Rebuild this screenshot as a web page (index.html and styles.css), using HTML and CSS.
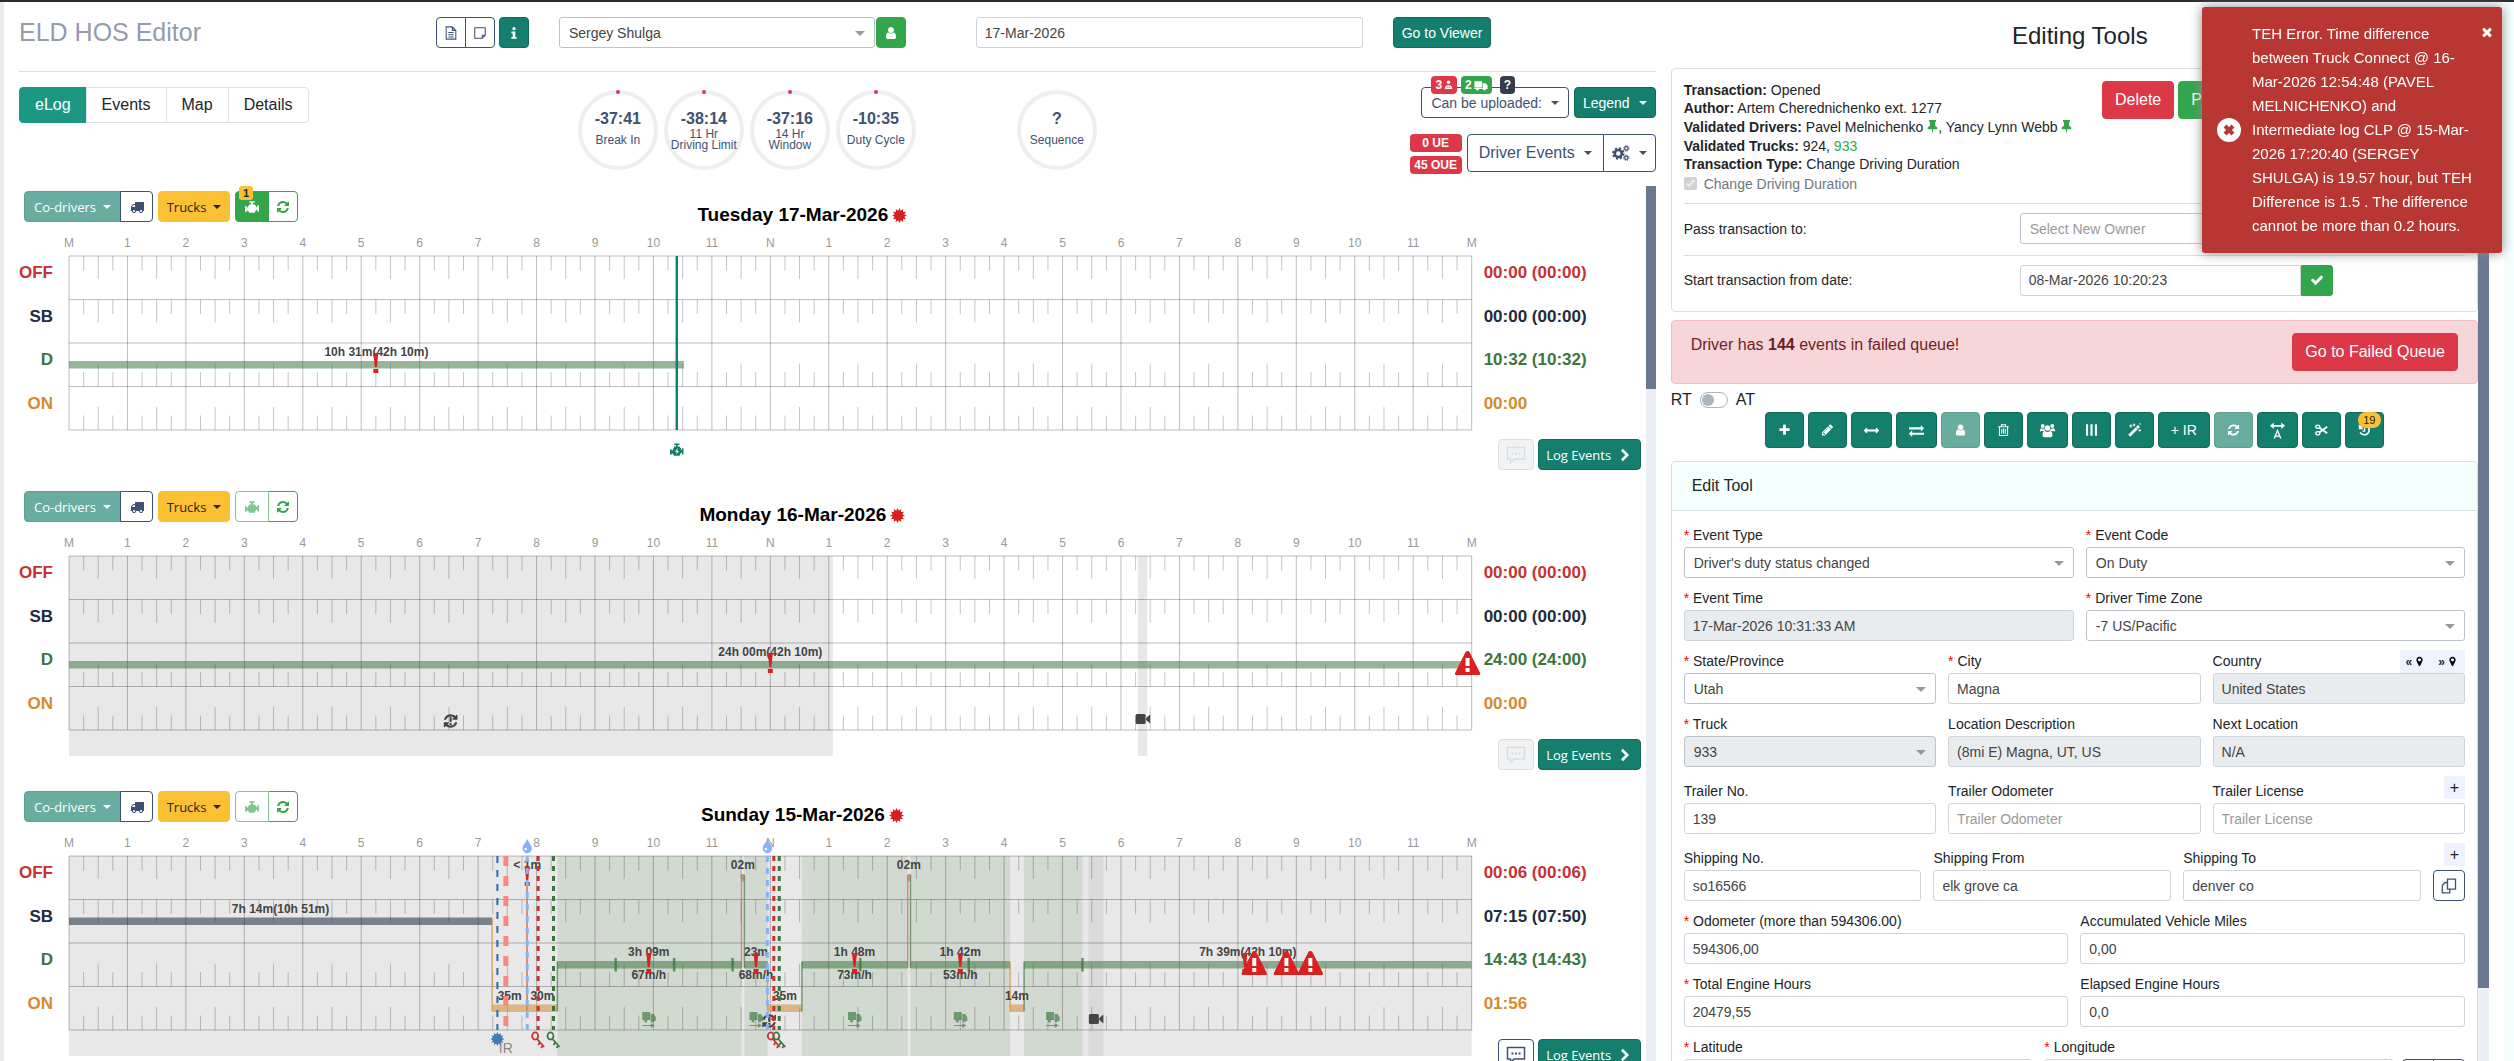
FILE: index.html
```html
<!DOCTYPE html>
<html lang="en">
<head>
<meta charset="utf-8">
<title>ELD HOS Editor</title>
<link rel="stylesheet" href="styles.css">
</head>
<body>
<svg class="sprite" aria-hidden="true">
  <symbol id="i-refresh" viewBox="0 0 1792 1792"><path d="M1639 1056q0 5-1 7-64 268-268 434.5t-478 166.500q-146 0-282.500-55t-243.500-157l-129 129q-19 19-45 19t-45-19-19-45v-448q0-26 19-45t45-19h448q26 0 45 19t19 45-19 45l-137 137q71 66 161 102t187 36q134 0 250-65t186-179q11-17 53-117 8-23 30-23h192q13 0 22.500 9.500t9.500 22.500zm25-800v448q0 26-19 45t-45 19h-448q-26 0-45-19t-19-45 19-45l138-138q-148-137-349-137-134 0-250 65t-186 179q-11 17-53 117-8 23-30 23h-199q-13 0-22.500-9.500t-9.500-22.500v-7q65-268 270-434.500t480-166.500q146 0 284 55.500t245 156.500l130-129q19-19 45-19t45 19 19 45z"/></symbol>
  <symbol id="i-truck" viewBox="0 0 1792 1792"><path d="M640 1408q0-52-38-90t-90-38-90 38-38 90 38 90 90 38 90-38 38-90zm-384-512h384v-256h-158q-13 0-22 9l-195 195q-9 9-9 22v30zm1280 512q0-52-38-90t-90-38-90 38-38 90 38 90 90 38 90-38 38-90zm256-1088v1024q0 15-4 26.500t-13.500 18.500-16.500 11.500-23.500 6-22.500 2-25.500 0-22.500-.5q0 106-75 181t-181 75-181-75-75-181h-384q0 106-75 181t-181 75-181-75-75-181h-64q-3 0-22.500.5t-25.500 0-22.500-2-23.500-6-16.500-11.500-13.500-18.500-4-26.500q0-26 19-45t45-19v-320q0-8-.5-35t0-38 2.500-34.500 6.500-37 14-30.500 22.500-30l198-198q19-19 50.500-32t58.500-13h160v-192q0-26 19-45t45-19h1024q26 0 45 19t19 45z"/></symbol>
  <symbol id="i-plus" viewBox="0 0 1792 1792"><path d="M1600 736v192q0 40-28 68t-68 28h-416v416q0 40-28 68t-68 28h-192q-40 0-68-28t-28-68v-416h-416q-40 0-68-28t-28-68v-192q0-40 28-68t68-28h416v-416q0-40 28-68t68-28h192q40 0 68 28t28 68v416h416q40 0 68 28t28 68z"/></symbol>
  <symbol id="i-pencil" viewBox="0 0 1792 1792"><path d="M491 1536l91-91-235-235-91 91v107h128v128h107zm523-928q0-22-22-22-10 0-17 7l-542 542q-7 7-7 17 0 22 22 22 10 0 17-7l542-542q7-7 7-17zm-54-192l416 416-832 832h-416v-416zm683 96q0 53-37 90l-166 166-416-416 166-165q36-38 90-38 53 0 91 38l235 234q37 39 37 91z"/></symbol>
  <symbol id="i-check" viewBox="0 0 1792 1792"><path d="M1671 566q0 40-28 68l-724 724-136 136q-28 28-68 28t-68-28l-136-136-362-362q-28-28-28-68t28-68l136-136q28-28 68-28t68 28l294 295 656-657q28-28 68-28t68 28l136 136q28 28 28 68z"/></symbol>
  <symbol id="i-times" viewBox="0 0 1792 1792"><path d="M1490 1322q0 40-28 68l-136 136q-28 28-68 28t-68-28l-294-294-294 294q-28 28-68 28t-68-28l-136-136q-28-28-28-68t28-68l294-294-294-294q-28-28-28-68t28-68l136-136q28-28 68-28t68 28l294 294 294-294q28-28 68-28t68 28l136 136q28 28 28 68t-28 68l-294 294 294 294q28 28 28 68z"/></symbol>
  <symbol id="i-arrows" viewBox="0 0 1792 1792"><path d="M1792 896q0 26-19 45l-256 256q-19 19-45 19t-45-19-19-45v-128h-1024v128q0 26-19 45t-45 19-45-19l-256-256q-19-19-19-45t19-45l256-256q19-19 45-19t45 19 19 45v128h1024v-128q0-26 19-45t45-19 45 19l256 256q19 19 19 45z"/></symbol>
  <symbol id="i-exchange" viewBox="0 0 1792 1792"><path d="M1792 1184v192q0 13-9.500 22.500t-22.500 9.500h-1376v192q0 13-9.500 22.500t-22.500 9.500q-12 0-24-10l-319-320q-9-9-9-22 0-14 9-23l320-320q9-9 23-9 13 0 22.500 9.500t9.500 22.500v192h1376q13 0 22.500 9.500t9.500 22.500zm0-544q0 14-9 23l-320 320q-9 9-23 9-13 0-22.500-9.500t-9.500-22.500v-192h-1376q-13 0-22.500-9.500t-9.500-22.500v-192q0-13 9.500-22.500t22.500-9.500h1376v-192q0-14 9-23t23-9q12 0 24 10l319 319q9 9 9 23z"/></symbol>
  <symbol id="i-user" viewBox="0 0 1792 1792"><path d="M1536 1399q0 109-62.500 187t-150.500 78h-854q-88 0-150.500-78t-62.500-187q0-85 8.500-160.500t31.500-152 58.500-131 94-89 134.500-34.500q131 128 313 128t313-128q76 0 134.500 34.500t94 89 58.500 131 31.500 152 8.500 160.500zm-256-887q0 159-112.500 271.500t-271.500 112.500-271.500-112.500-112.500-271.500 112.500-271.500 271.500-112.500 271.500 112.500 112.500 271.500z"/></symbol>
  <symbol id="i-marker" viewBox="0 0 1792 1792"><path d="M1152 640q0-106-75-181t-181-75-181 75-75 181 75 181 181 75 181-75 75-181zm256 0q0 109-33 179l-364 774q-16 33-47.500 52t-67.500 19-67.500-19-46.500-52l-365-774q-33-70-33-179 0-212 150-362t362-150 362 150 150 362z"/></symbol>
  <symbol id="i-trash" viewBox="0 0 16 16"><path d="M1.500 4h13M5.500 4V1.500h5V4M3 4.500V14.800h10V4.500M5.800 6.500v6M8 6.500v6M10.200 6.500v6" fill="none" stroke="currentColor" stroke-width="1.300"/></symbol>
  <symbol id="i-users" viewBox="0 0 18 16"><circle cx="3.300" cy="2.600" r="2.300"/><circle cx="14.700" cy="2.600" r="2.300"/><circle cx="9" cy="5" r="3.200"/><path d="M0 8.500C0 6 .8 5.200 2 5.200c1 .8 2 .8 3 .3.200 1.400.6 2.300 1.300 3H1.500C.6 9.800 0 9.400 0 8.500zM18 8.500c0-2.500-.8-3.300-2-3.300-1 .8-2 .8-3 .3-.2 1.400-.6 2.300-1.300 3h4.800c.9 1.300 1.500.9 1.500 0zM3 13.500C3 10.500 4 8.600 6 8.600c2 1.500 4 1.500 6 0 2 0 3 1.900 3 4.900 0 1.500-.8 2.500-2 2.500H5c-1.200 0-2-1-2-2.500z"/></symbol>
  <symbol id="i-bars" viewBox="0 0 16 16"><path d="M2.500 1v14M8 1v14M13.500 1v14" fill="none" stroke="currentColor" stroke-width="2.600"/></symbol>
  <symbol id="i-magic" viewBox="0 0 16 16"><path d="M1.500 15L13.500 3" fill="none" stroke="currentColor" stroke-width="3.400"/><path d="M9.800 4.700l2 2" stroke="#157f6e" stroke-width="1"/><path d="M1.500 3h4M3.500 1v4M7.500 0v3.500M6 1.800h3M13 8.500h3M14.500 7v3M14 .5h2" stroke="currentColor" stroke-width="1.200" fill="none"/></symbol>
  <symbol id="i-cut" viewBox="0 0 16 16"><g fill="none" stroke="currentColor" stroke-width="1.700"><ellipse cx="3.500" cy="4" rx="2.500" ry="2"/><ellipse cx="3.500" cy="12" rx="2.500" ry="2"/><path d="M5.500 5.200L15 12M5.500 10.800L15 4" stroke-width="2.200"/></g></symbol>
  <symbol id="i-history" viewBox="0 0 16 16"><path d="M3 4.200A6 6 0 1 1 2.600 11" fill="none" stroke="currentColor" stroke-width="2"/><path d="M1 1v6h6zM7.400 5h1.500v5H5.600V8.600h1.800z"/></symbol>
  <symbol id="i-width" viewBox="0 0 16 18"><path d="M0 4l4-3.500V3h8V.5L16 4l-4 3.500V5H4v2.500z"/><path d="M4.500 17.500L8 9l3.500 8.500M5.500 15h5" fill="none" stroke="currentColor" stroke-width="1.400"/></symbol>
  <symbol id="i-file" viewBox="0 0 16 16"><path d="M2.500 1h7l4 4v10h-11zM9.500 1v4h4M5 7.500h6M5 10h6M5 12.500h6" fill="none" stroke="currentColor" stroke-width="1.200"/></symbol>
  <symbol id="i-note" viewBox="0 0 16 16"><path d="M2 2h12v8.500L10.500 14H2zM14 10.500h-3.500V14" fill="none" stroke="currentColor" stroke-width="1.200"/></symbol>
  <symbol id="i-info" viewBox="0 0 16 16"><circle cx="8" cy="3" r="1.900"/><path d="M5 6.200h4.500v6.300H11v2H5v-2h1.500V8.200H5z"/></symbol>
  <symbol id="i-engine" viewBox="0 0 16 16"><path d="M5 1.500h6v1.700H9V5h2.200l1.600 2v1H14V6h2v7h-2v-1.800h-1.200L11 14.500H5L3.200 12H2v1.500H0V7h2v1.500h1L5 5h2V3.200H5z"/></symbol>
  <symbol id="i-engine2" viewBox="0 0 16 16"><path d="M5 .5h6v1.700H9V4h2l2 2.500V8h1V6h2v7h-2v-1.800h-1.200L11 14.500H5L3.200 12H2v1.500H0V7h2v1.500h1L5 4h2V2.200H5z"/><path d="M9 6L6 10h2l-.8 3L10.500 9h-2z" fill="#fff"/></symbol>
  <symbol id="i-chevron" viewBox="0 0 12 16"><path d="M2.500 2l6 6-6 6" fill="none" stroke="currentColor" stroke-width="3"/></symbol>
  <symbol id="i-comment" viewBox="0 0 20 18"><path d="M1.500 1.500h17v11.500H8L4.500 16.500V13h-3z" fill="none" stroke="currentColor" stroke-width="1.500"/><path d="M5.500 6.500h2v2h-2zM9 6.500h2v2H9zM12.500 6.500h2v2h-2z"/></symbol>
  <symbol id="i-pin" viewBox="0 0 12 16"><path d="M2 0h8v2H9v4.500l2.500 2V10.500H6.800L6 16l-.8-5.500H.5V8.500L3 6.500V2H2z"/></symbol>
  <symbol id="i-copy" viewBox="0 0 16 16"><path d="M6.500 1.200h8v10h-8zM6 4.500H4L1.300 7.500v7.300h7.500V11.500" fill="none" stroke="currentColor" stroke-width="1.300"/></symbol>
  <symbol id="i-cogs" viewBox="0 0 18 16"><g fill="none" stroke="currentColor"><circle cx="6.300" cy="8.500" r="3.500" stroke-width="2.600"/><circle cx="6.300" cy="8.500" r="5.300" stroke-width="1.800" stroke-dasharray="2.200 1.960"/><circle cx="14.300" cy="3.400" r="1.700" stroke-width="1.200"/><circle cx="14.300" cy="3.400" r="2.700" stroke-width="1" stroke-dasharray="1.100 1.020"/><circle cx="14.300" cy="12.800" r="1.700" stroke-width="1.200"/><circle cx="14.300" cy="12.800" r="2.700" stroke-width="1" stroke-dasharray="1.100 1.020"/></g></symbol>
  <symbol id="i-driver" viewBox="0 0 12 14"><circle cx="6" cy="3.200" r="2.400"/><path d="M.8 12.500c0-3.500 2-5 5.200-5s5.200 1.500 5.200 5z"/><path d="M3 11c1.500-1.600 4.500-1.600 6 0" stroke="#dc3848" stroke-width="1" fill="none"/></symbol>
  <symbol id="i-van" viewBox="0 0 18 14"><path d="M.5 1.500h10v8H.5zM11.300 4h3.500L17.500 7v4.500H.5v-1.300h10.800z"/><circle cx="4.500" cy="11.500" r="1.900"/><circle cx="13.500" cy="11.500" r="1.900"/></symbol>
  <symbol id="i-seal" viewBox="-8 -8 16 16"><path d="M8 0L5.100 1.400 6.900 4 3.700 3.700 4 6.900 1.400 5.100 0 8-1.400 5.100-4 6.900-3.700 3.700-6.900 4-5.100 1.400-8 0-5.100-1.400-6.900-4-3.700-3.700-4-6.900-1.400-5.100 0-8 1.400-5.100 4-6.900 3.700-3.700 6.900-4 5.100-1.400z"/></symbol>
</svg>

<main class="layout">
  <section class="editor">
    <header class="topbar">
      <h1>ELD HOS Editor</h1>
      <div class="row">
        <div class="group"><button class="btn sm outline sq" aria-label="Document"><svg class="ic"><use href="#i-file"/></svg></button><button class="btn sm outline sq" aria-label="Note"><svg class="ic"><use href="#i-note"/></svg></button></div>
        <button class="btn sm teal sq" aria-label="Info"><svg class="ic"><use href="#i-info"/></svg></button>
      </div>
      <div class="driver">
        <span class="select"><select aria-label="Driver"><option>Sergey Shulga</option></select></span>
        <button class="btn sm green sq" aria-label="Driver profile"><svg class="ic"><use href="#i-user"/></svg></button>
      </div>
      <input class="date" type="text" value="17-Mar-2026" aria-label="Date">
      <div><button class="btn sm teal">Go to Viewer</button></div>
    </header>

    <div class="subbar">
      <nav class="tabs"><a href="#elog" class="on">eLog</a><a href="#events">Events</a><a href="#map">Map</a><a href="#details">Details</a></nav>
      <div class="gauges">
        <div class="gauge run"><b>-37:41</b><span>Break In</span></div>
        <div class="gauge run two"><b>-38:14</b><span>11 Hr<br>Driving Limit</span></div>
        <div class="gauge run two"><b>-37:16</b><span>14 Hr<br>Window</span></div>
        <div class="gauge run"><b>-10:35</b><span>Duty Cycle</span></div>
        <div class="gauge seq"><b>?</b><span>Sequence</span></div>
      </div>
      <div class="actions">
        <div class="row">
          <div class="upload">
            <button class="btn sm outline">Can be uploaded: <i class="caret"></i></button>
            <div class="marks"><span class="badge red">3 <svg class="ic s"><use href="#i-driver"/></svg></span><span class="badge green">2 <svg class="ic v"><use href="#i-van"/></svg></span><span class="badge dark">?</span></div>
          </div>
          <button class="btn sm teal">Legend <i class="caret"></i></button>
        </div>
        <div class="row">
          <div class="counts"><span class="badge red">0 UE</span><span class="badge red">45 OUE</span></div>
          <div class="group"><button class="btn lg outline events">Driver Events <i class="caret"></i></button><button class="btn lg outline cog" aria-label="Settings"><svg class="ic"><use href="#i-cogs"/></svg><i class="caret"></i></button></div>
        </div>
      </div>
    </div>

    <div class="pane">
      <div class="days" id="days"></div>
      <div class="scroll logs"><i></i></div>
    </div>
  </section>

  <section class="tools">
    <h2>Editing Tools</h2>
    <div class="pane">
      <div class="stack">
        <div class="card info">
          <div class="summary">
            <div>
              <p><b>Transaction:</b> Opened</p>
              <p><b>Author:</b> Artem Cherednichenko ext. 1277</p>
              <p class="pinned"><b>Validated Drivers:</b> Pavel Melnichenko <svg class="pin"><use href="#i-pin"/></svg>, Yancy Lynn Webb <svg class="pin"><use href="#i-pin"/></svg></p>
              <p><b>Validated Trucks:</b> 924, <span class="ok">933</span></p>
              <p><b>Transaction Type:</b> Change Driving Duration</p>
              <label class="tick"><input type="checkbox" checked disabled> Change Driving Duration</label>
            </div>
            <div class="row"><button class="btn lg red">Delete</button><button class="btn lg green">Process</button></div>
          </div>
          <div class="line"><label for="owner">Pass transaction to:</label><span class="select"><select id="owner" class="dim"><option>Select New Owner</option></select></span></div>
          <div class="line"><label for="start">Start transaction from date:</label><span class="row tight"><input id="start" type="text" value="08-Mar-2026 10:20:23"><button class="btn sm green" aria-label="Apply"><svg class="ic"><use href="#i-check"/></svg></button></span></div>
        </div>
        <div class="alert"><span>Driver has <b>144</b> events in failed queue!</span><button class="btn lg red">Go to Failed Queue</button></div>
        <label class="switch">RT <input type="checkbox" role="switch"> AT</label>
        <div class="toolbar">
          <button class="btn teal" aria-label="Add"><svg class="ic"><use href="#i-plus"/></svg></button>
          <button class="btn teal" aria-label="Edit"><svg class="ic"><use href="#i-pencil"/></svg></button>
          <button class="btn teal" aria-label="Move"><svg class="ic w"><use href="#i-arrows"/></svg></button>
          <button class="btn teal" aria-label="Swap"><svg class="ic w"><use href="#i-exchange"/></svg></button>
          <button class="btn teal faded" aria-label="Driver"><svg class="ic"><use href="#i-user"/></svg></button>
          <button class="btn teal" aria-label="Delete"><svg class="ic"><use href="#i-trash"/></svg></button>
          <button class="btn teal" aria-label="Team"><svg class="ic w"><use href="#i-users"/></svg></button>
          <button class="btn teal" aria-label="Columns"><svg class="ic"><use href="#i-bars"/></svg></button>
          <button class="btn teal" aria-label="Auto fix"><svg class="ic"><use href="#i-magic"/></svg></button>
          <button class="btn teal">+ IR</button>
          <button class="btn teal faded" aria-label="Refresh"><svg class="ic"><use href="#i-refresh"/></svg></button>
          <button class="btn teal" aria-label="Fit"><svg class="ic w"><use href="#i-width"/></svg></button>
          <button class="btn teal" aria-label="Cut"><svg class="ic"><use href="#i-cut"/></svg></button>
          <button class="btn teal hist" aria-label="History"><svg class="ic"><use href="#i-history"/></svg><span class="dot">19</span></button>
        </div>
        <form class="card form">
          <h3>Edit Tool</h3>
          <div class="fields">
            <div class="f2a">
              <div class="field"><label for="et" class="req">Event Type</label><span class="select"><select id="et"><option>Driver's duty status changed</option></select></span></div>
              <div class="field"><label for="ec" class="req">Event Code</label><span class="select"><select id="ec"><option>On Duty</option></select></span></div>
              <div class="field"><label for="tm" class="req">Event Time</label><input id="tm" type="text" value="17-Mar-2026 10:31:33 AM" disabled></div>
              <div class="field"><label for="tz" class="req">Driver Time Zone</label><span class="select"><select id="tz"><option>-7 US/Pacific</option></select></span></div>
            </div>
            <div class="f3">
              <div class="field"><label for="st" class="req">State/Province</label><span class="select"><select id="st"><option>Utah</option></select></span></div>
              <div class="field"><label for="ci" class="req">City</label><input id="ci" type="text" value="Magna"></div>
              <div class="field"><div class="lab"><label for="co">Country</label><span class="mini"><button type="button" aria-label="Previous location">«<svg class="mk"><use href="#i-marker"/></svg></button><button type="button" aria-label="Next location">»<svg class="mk"><use href="#i-marker"/></svg></button></span></div><input id="co" type="text" value="United States" disabled></div>
              <div class="field"><label for="tr" class="req">Truck</label><span class="select"><select id="tr" disabled><option>933</option></select></span></div>
              <div class="field"><label for="ld">Location Description</label><input id="ld" type="text" value="(8mi E) Magna, UT, US" disabled></div>
              <div class="field"><label for="nl">Next Location</label><input id="nl" type="text" value="N/A" disabled></div>
            </div>
            <div class="f3 apart">
              <div class="field"><label for="tn">Trailer No.</label><input id="tn" type="text" value="139"></div>
              <div class="field"><label for="to">Trailer Odometer</label><input id="to" type="text" placeholder="Trailer Odometer"></div>
              <div class="field"><div class="lab"><label for="tl">Trailer License</label><span class="mini add"><button type="button">+</button></span></div><input id="tl" type="text" placeholder="Trailer License"></div>
            </div>
            <div class="f4 apart">
              <div class="field"><label for="sn">Shipping No.</label><input id="sn" type="text" value="so16566"></div>
              <div class="field"><label for="sf">Shipping From</label><input id="sf" type="text" value="elk grove ca"></div>
              <div class="field"><label for="sh">Shipping To</label><input id="sh" type="text" value="denver co"></div>
              <div class="field end"><span class="mini add"><button type="button">+</button></span><button type="button" class="btn outline copy" aria-label="Copy"><svg class="ic"><use href="#i-copy"/></svg></button></div>
            </div>
            <div class="f2">
              <div class="field"><label for="od" class="req">Odometer (more than 594306.00)</label><input id="od" type="text" value="594306,00"></div>
              <div class="field"><label for="av">Accumulated Vehicle Miles</label><input id="av" type="text" value="0,00"></div>
              <div class="field"><label for="te" class="req">Total Engine Hours</label><input id="te" type="text" value="20479,55"></div>
              <div class="field"><label for="ee">Elapsed Engine Hours</label><input id="ee" type="text" value="0,0"></div>
            </div>
            <div class="fgeo">
              <div class="field"><label for="la" class="req">Latitude</label><input id="la" type="text"></div>
              <div class="field"><label for="lo" class="req">Longitude</label><input id="lo" type="text"></div>
              <div class="field end"><span class="group"><button type="button" class="btn outline copy" aria-label="Copy position"></button><button type="button" class="btn outline copy" aria-label="Paste position"></button></span></div>
            </div>
          </div>
        </form>
      </div>
      <div class="scroll form-scroll"><i></i></div>
    </div>
  </section>
</main>

<div class="toast" role="alert">
  <svg class="sign" viewBox="0 0 24 24"><circle cx="12" cy="12" r="12" fill="#fff"/><path d="M8 8l8 8M16 8l-8 8" stroke="#b93733" stroke-width="4"/></svg>
  <p>TEH Error. Time difference between Truck Connect @ 16-Mar-2026 12:54:48 (PAVEL MELNICHENKO) and Intermediate log CLP @ 15-Mar-2026 17:20:40 (SERGEY SHULGA) is 19.57 hour, but TEH Difference is 1.5 . The difference cannot be more than 0.2 hours.</p>
  <button aria-label="Close"><svg class="ic"><use href="#i-times"/></svg></button>
</div>
<script src="script.js"></script>
</body>
</html>
```
FILE: styles.css
```css
* { box-sizing: border-box; }
html { height: 100%; border-top: 2px solid #2d2b2e; }
body {
  margin: 0; height: 100%; overflow: hidden; padding: 0 15px;
  border-left: 4px solid #e9e9f0; border-right: 10px solid #f4fffd;
  font: 14px/18px "Liberation Sans", Arial, sans-serif; color: #212529; background: #fff;
}
p, h1, h2, h3 { margin: 0; font-weight: normal; }
.sprite { position: absolute; width: 0; height: 0; }
.ic { width: 14px; height: 14px; fill: currentColor; flex: none; display: block; }
.ic.s { width: 9px; height: 10px; }
.ic.v { width: 14px; height: 11px; }
.row { display: flex; gap: 4px; }
.row.tight { gap: 0; }
.group { display: flex; }
.group > .btn:not(:first-child) { border-top-left-radius: 0; border-bottom-left-radius: 0; margin-left: -1px; }
.group > .btn:not(:last-child) { border-top-right-radius: 0; border-bottom-right-radius: 0; }

.layout { display: grid; grid-template-columns: minmax(0, 2fr) minmax(0, 1fr); gap: 15px; height: 100%; }
.editor, .tools { display: flex; flex-direction: column; min-height: 0; }
.pane { display: flex; flex: 1; min-height: 0; overflow: hidden; }
.scroll { background: #ebeff3; flex: none; }
.scroll i { display: block; background: #6b7891; }
.logs { width: 10px; }
.logs i { height: 203px; }
.form-scroll { width: 11px; }
.form-scroll i { height: 920px; }

/* buttons */
.btn {
  display: inline-flex; align-items: center; justify-content: center; gap: 6px;
  border: 1px solid transparent; border-radius: 4px; padding: 0 8px;
  font: 14px/18px "Liberation Sans", Arial, sans-serif; color: #fff; background: none; white-space: nowrap;
}
.btn.sm { height: 31px; }
.btn.lg { height: 38px; font-size: 16px; padding: 0 12px; }
.btn.sq { width: 30px; padding: 0; }
.teal { background: #157f6e; border-color: #11695b; }
.green { background: #33a64c; border-color: #33a64c; }
.red { background: #dc3848; border-color: #dc3848; }
.dark { background: #343c49; }
.outline { border-color: #3f5173; color: #3f5173; background: #fff; }
.faded { background: #68ada0; border-color: #5fa093; }
.yellow { background: #fcc034; border-color: #fcc034; color: #212529; }
.caret { width: 0; height: 0; border: 4px solid transparent; border-top-color: currentColor; border-bottom: 0; margin-left: 3px; }
.badge {
  display: inline-flex; align-items: center; justify-content: center; gap: 2px; white-space: nowrap;
  height: 18px; padding: 0 4px; border-radius: 4px; color: #fff; font-size: 12px; font-weight: bold;
}

/* controls */
input[type=text], select {
  width: 100%; height: 31px; border: 1px solid #ced4da; border-radius: 3px; background: #fff;
  padding: 0 8px; font: 14px/18px "Liberation Sans", Arial, sans-serif; color: #444; display: block;
}
select { appearance: none; padding: 0 9px; border-color: #bfc3c8; }
select.dim, input::placeholder { color: #999; }
input:disabled, select:disabled { background: #e9ecef; color: #444; opacity: 1; }
.select { display: block; position: relative; flex: 1; }
.select::after {
  content: ""; position: absolute; right: 10px; top: calc(50% - 2px);
  border: 5px solid transparent; border-top-color: #999; border-bottom: 0;
}

/* top bar */
.topbar {
  display: grid; grid-template-columns: 417fr 123fr 417fr 417fr 263fr;
  height: 70px; padding-top: 15px; border-bottom: 1px solid #ddd; align-items: start;
}
.topbar h1 { font-size: 25px; line-height: 31px; color: #959ba9; }
.topbar .driver { display: flex; gap: 1px; margin-right: 70px; }
.topbar .date { width: auto; margin-right: 30px; }

.subbar { display: grid; grid-template-columns: 1fr auto 1fr; height: 114px; padding-top: 15px; align-items: start; }
.tabs { display: flex; }
.tabs a {
  height: 36px; padding: 0 15px; border: 1px solid #dee2e6; margin-left: -1px;
  font-size: 16px; line-height: 34px; color: #212529; text-decoration: none;
}
.tabs a:first-child { margin: 0; border-radius: 4px 0 0 4px; }
.tabs a:last-child { border-radius: 0 4px 4px 0; }
.tabs .on { background: #1c9783; border-color: #1c9783; color: #fff; }
.gauges { display: flex; gap: 6px; padding-top: 3px; color: #3f5173; text-align: center; }
.gauge {
  position: relative; width: 80px; height: 80px; border: 4px solid #eee; border-radius: 50%;
  padding-top: 16px; white-space: nowrap; font-size: 12px;
}
.gauge b { display: block; font-size: 16px; line-height: 18px; }
.gauge span { display: flex; justify-content: center; line-height: 11px; padding-top: 7px; }
.gauge.two span { padding-top: 1px; margin: 0 -4px; }
.gauge.run::before { content: ""; position: absolute; left: 34px; top: -4px; width: 4px; height: 4px; border-radius: 50%; background: #dc3848; }
.seq { margin-left: 95px; }
.actions { display: flex; flex-direction: column; align-items: flex-end; gap: 16px; }
.actions .row { gap: 5px; }
.upload { position: relative; }
.upload .btn { padding: 0 9px; }
.marks { position: absolute; left: 10px; top: -11px; display: flex; gap: 4px; }
.marks .dark { margin-left: 4px; }
.counts { display: flex; flex-direction: column; gap: 4px; }
.counts .badge { width: 52px; }
.actions .events { padding: 0 11px; }
.cog .ic { width: 18px; height: 16px; }
.actions .cog { padding: 0 8px; }

/* daily logs */
.days { flex: 1; padding-right: 5px; overflow: hidden; }
.day { height: 300px; padding-top: 5px; }
.day-head { display: grid; grid-template-columns: 1fr auto 1fr; padding: 0 60px 0 5px; height: 31px; }
.day-head .row { gap: 5px; }
.day-head .btn, .foot .btn { font-family: "Open Sans", "Noto Sans", sans-serif; font-size: 13px; gap: 6px; }
.day-head .truck { width: 33px; }
.day-head .engine { width: 34px; position: relative; }
.day-head .engine.idle { color: #7fc78e; background: #fff; border-color: #7fc78e; }
.day-head .sync { background: #fff; color: #33a64c; border-color: #33a64c; }
.day-head .codriver { width: 97px; gap: 4px; }
.day-head .trucks { width: 72px; gap: 4px; }
.day-head .num {
  position: absolute; left: 3px; top: -6px; width: 14px; height: 14px; border-radius: 3px;
  background: #fcc034; color: #212529; font: bold 11px/14px "Liberation Sans", sans-serif;
}
.day-head h3 { display: flex; align-items: center; gap: 4px; padding-top: 15px; font-size: 19px; font-weight: bold; line-height: 18px; color: #000; }
.day-head h3 .ic { width: 15px; height: 15px; color: #d81e1e; }
.day-body { display: grid; grid-template: 174px / 50px minmax(0, 1fr) 169px; margin-top: 34px; }
.rows { display: grid; grid-template-rows: repeat(4, 1fr); font-size: 17px; font-weight: bold; line-height: 33px; }
.rows.names { text-align: right; padding-right: 16px; }
.rows.sums { padding-left: 12px; }
.off { color: #c73132; } .sb { color: #1d2c3e; } .d { color: #3b763e; } .on-duty { color: #d58a2d; }
.chart { width: 100%; height: 200px; overflow: visible; display: block; font-family: "Liberation Sans", Arial, sans-serif; font-size: 12px; }
.foot { display: flex; justify-content: flex-end; gap: 4px; margin-top: 9px; }
.foot .cm { width: 36px; }
.foot .cm .ic { width: 20px; height: 18px; }
.foot .cm:disabled { color: #dadde0; border-color: #dadde0; background: #f1f2f3; }
.foot .log { width: 103px; gap: 7px; }

/* editing tools */
.tools h2 { font-size: 24px; line-height: 28px; padding-top: 20px; height: 66px; text-align: center; flex: none; }
.stack { flex: 1; min-width: 0; }
.card { border: 1px solid #ddd; border-radius: 4px; }
.info { height: 244px; padding: 12px; }
.summary { display: flex; justify-content: space-between; height: 123px; border-bottom: 1px solid #ddd; }
.summary .row { width: 363px; }
.pinned { padding-top: 1px; height: 20px; }
.pin { width: 11px; height: 14px; fill: #33a64c; vertical-align: -2px; }
.ok { color: #33a64c; }
.tick { display: flex; align-items: center; gap: 7px; color: #70777d; height: 21px; }
.tick input { margin: 0; width: 13px; height: 13px; }
.line { display: grid; grid-template-columns: 43fr 57fr; align-items: center; height: 51px; padding-bottom: 2px; }
.line + .line { border-top: 1px solid #ddd; }
.line .select { margin-right: 40px; }
.line .row input { width: 281px; border-radius: 3px 0 0 3px; }
.line .btn { width: 32px; border-radius: 0 3px 3px 0; }
.alert {
  display: flex; justify-content: space-between; align-items: flex-start; margin-top: 8px; height: 64px; padding: 12px 19px;
  border: 1px solid #f3bfc5; border-radius: 4px; background: #f7d6d9; color: #721c24; font-size: 16px;
}
.alert span { line-height: 24px; }
.switch { display: flex; align-items: center; gap: 8px; height: 28px; font-size: 16px; padding-top: 3px; }
.switch input { appearance: none; margin: 0; width: 28px; height: 16px; border: 1px solid #adb5bd; border-radius: 8px; background: #fff; position: relative; }
.switch input::before { content: ""; position: absolute; left: 1px; top: 1px; width: 12px; height: 12px; border-radius: 50%; background: #adb5bd; }
.toolbar { display: flex; justify-content: center; gap: 4px; height: 36px; }
.toolbar .btn { flex: none; padding: 0 12px; }
.toolbar .ic { width: 13px; }
.toolbar .ic.w { width: 15px; height: 17px; }
.toolbar .hist { position: relative; }
.dot { position: absolute; right: 2px; top: -1px; width: 23px; height: 16px; border-radius: 8px; background: #fcc034; color: #212529; font: 11px/16px "Liberation Sans", sans-serif; }
.form { margin-top: 13px; }
.form h3 { height: 49px; padding-left: 20px; font-size: 16px; line-height: 47px; background: #f5fffd; border-bottom: 1px solid #d5e3e0; border-radius: 4px 4px 0 0; }
.fields { padding: 4px 12px; }
.fields > div { display: grid; column-gap: 12px; }
.f2a { grid-template-columns: 390fr 379fr; }
.f2 { grid-template-columns: 1fr 1fr; }
.f3 { grid-template-columns: 1fr 1fr 1fr; }
.f4 { grid-template-columns: 1fr 1fr 1fr 32px; }
.fgeo { grid-template-columns: 1fr 1fr 60px; }
.apart { margin-top: 4px; }
.field > label { display: block; height: 32px; padding-top: 11px; white-space: nowrap; }
.lab { display: flex; justify-content: space-between; align-items: flex-end; height: 32px; }
.lab label { padding-bottom: 3px; }
.req::before { content: "* "; color: #f00; }
.mini { display: flex; }
.mini.add { padding-bottom: 4px; }
.mini button { height: 23px; border: 0; padding: 0 7px 0 6px; background: #eff3fd; display: flex; align-items: center; gap: 2px; font: bold 12px/18px "Liberation Sans", sans-serif; color: #212529; }
.mini.add button { width: 21px; padding: 0; justify-content: center; font-size: 16px; font-weight: normal; }
.mk { width: 11px; height: 11px; }
.field.end { display: flex; flex-direction: column; align-items: flex-end; justify-content: flex-end; }
.copy { width: 32px; height: 31px; padding: 0; }
.copy .ic { width: 16px; height: 16px; }

.toast {
  position: fixed; top: 7px; right: 12px; width: 300px; min-height: 246px; padding: 15px 20px 15px 50px;
  background: #b93733; color: #fff; border-radius: 3px; box-shadow: 0 0 12px #888;
}
.toast p { font-size: 15px; line-height: 24px; }
.toast .sign { position: absolute; left: 15px; top: 111px; width: 24px; height: 24px; }
.toast button { position: absolute; right: 8px; top: 18px; padding: 0; border: 0; background: none; color: #fff; }
```
FILE: script.js
```js
const ROW = 43.5;
const pct = h => (h / 24 * 100).toFixed(3) + '%';
const INK = { off: '#cf5a5a', sb: '#1d2c3e', d: '#3b763e', on: '#d58a2d' };
const LEVEL = { off: 0, sb: 1, d: 2, on: 3 };
const mid = s => (LEVEL[s] + 0.5) * ROW;

const rect = (a, b, y, h, fill, op = 1) =>
  `<rect x="${pct(a)}" y="${y}" width="${pct(b - a)}" height="${h}" fill="${fill}" opacity="${op}"/>`;
const vline = (h, y1, y2, color, w, extra = '') =>
  `<line x1="${pct(h)}" x2="${pct(h)}" y1="${y1}" y2="${y2}" stroke="${color}" stroke-width="${w}" ${extra}/>`;
const text = (h, y, s, extra = 'font-weight="bold" fill="#444"') =>
  `<text x="${pct(h)}" y="${y}" text-anchor="middle" ${extra}>${s}</text>`;
const at = (h, y, body) => `<svg x="${pct(h)}" y="${y}" overflow="visible">${body}</svg>`;

const bang = (h, y = 97) => at(h, y, '<path d="M-2.500 0h5L1 14h-2zM-2.500 16h5v4h-5z" fill="#dc1f1f"/>');
const warn = h => at(h, 95, '<path d="M0 0q1.500 0 2 1L12.500 22q.8 2-1 2h-23q-1.800 0-1-2L-2 1q.5-1 2-1z" fill="#dc1f1f"/><path d="M-2 7h4v8h-4zM-2 17h4v4h-4z" fill="#fff"/>');
const camera = h => at(h, 163, '<rect x="-7" y="-5" width="10" height="10" rx="1.500" fill="#444"/><path d="M3.500-1L7.500-4.500v9L3.500 1z" fill="#444"/>');
const sync = h => at(h, 165, '<svg x="-8" y="-8" width="16" height="16" fill="#444"><use href="#i-refresh"/></svg><path d="M-1-4h2v5h-2zM-1 2h2v2h-2z" fill="#444"/>');
const trip = h => at(h, 156, '<g fill="#3b763e" opacity=".65"><path d="M-6.500 0h8v8h-8zM2 2h3l2 3v4H2z"/><circle cx="-3" cy="9" r="1.600"/><circle cx="3.500" cy="9" r="1.600"/><path d="M-6.500 13h8.500V11l4 2.500-4 2.500v-2h-8.500z"/></g>');
const drop = h => at(h, -10, '<path d="M0-7C2-2.500 4.700-.5 4.700 2.500a4.700 4.700 0 0 1-9.400 0C-4.700-.5-2-2.500 0-7z" fill="#86b1fb"/><circle cx="-1.500" cy="3" r="1.300" fill="#fff"/>');
const key = (h, c) => at(h, 183, `<g transform="translate(-3 -3)" fill="none" stroke="${c}" stroke-width="1.800"><ellipse rx="3" ry="3.600"/><path d="M2 3l7 8M5 6l-2 3M8 9l-2 3"/></g>`);

function grid() {
  let s = '';
  for (let h = 0; h <= 24; h++) s += vline(h, 0, 174, '#000', 1, 'opacity=".25"');
  for (let r = 0; r <= 4; r++)
    s += `<line x1="0" x2="100%" y1="${r * ROW}" y2="${r * ROW}" stroke="#000" opacity=".25" stroke-width="1"/>`;
  for (let q = 0; q < 96; q++) {
    if (q % 4 === 0) continue;
    const len = q % 2 ? 14.500 : 23;
    for (let r = 0; r < 4; r++) {
      const y = r * ROW;
      s += r < 2 ? vline(q / 4, y, y + len, '#000', 1, 'opacity=".22"') : vline(q / 4, y + ROW - len, y + ROW, '#000', 1, 'opacity=".22"');
    }
  }
  ['M', 1, 2, 3, 4, 5, 6, 7, 8, 9, 10, 11, 'N', 1, 2, 3, 4, 5, 6, 7, 8, 9, 10, 11, 'M'].forEach((t, h) => {
    s += text(h, -9, t, 'fill="#999"');
  });
  return s;
}

/* duty segments: [status, from, to]; joins take the colour of the status entered */
function duty(list) {
  let s = '';
  list.forEach(([st, a, b], i) => {
    s += rect(a, b, mid(st) - 3.750, 7.500, INK[st], st === 'd' ? 0.53 : 0.55);
    if (i) {
      const from = mid(list[i - 1][0]), to = mid(st);
      s += vline(a, Math.min(from, to) - 3, Math.max(from, to) + 3, INK[st], 1.500, 'opacity=".65"');
    }
  });
  return s;
}

const days = [
  {
    title: 'Tuesday 17-Mar-2026', engine: 1, sums: ['00:00 (00:00)', '00:00 (00:00)', '10:32 (10:32)', '00:00'],
    back: '',
    front: duty([['d', 0, 10.520]]) + text(5.260, 100, '10h 31m(42h 10m)') + bang(5.250) +
      vline(10.400, 0, 174, '#157f6e', 2.500) +
      at(10.400, 194, '<svg x="-7" y="-7" width="14" height="14" fill="#157f6e"><use href="#i-engine2"/></svg>')
  },
  {
    title: 'Monday 16-Mar-2026', sums: ['00:00 (00:00)', '00:00 (00:00)', '24:00 (24:00)', '00:00'],
    back: rect(0, 13.070, 0, 200, '#e8e8e8') + rect(18.290, 18.450, 0, 200, '#e8e8e8'),
    front: duty([['d', 0, 24]]) + text(12, 100, '24h 00m(42h 10m)') + bang(12) + sync(6.530) + camera(18.370) + warn(23.930)
  },
  {
    title: 'Sunday 15-Mar-2026', note: true, sums: ['00:06 (00:06)', '07:15 (07:50)', '14:43 (14:43)', '01:56'],
    back: rect(0, 24, 0, 200, '#e8e8e8') +
      [[8.356, 11.508], [11.555, 11.953], [12.540, 14.352], [14.398, 16.103], [16.342, 17.339]].map(([a, b]) => rect(a, b, 0, 200, '#d2d9d1')).join('') +
      rect(17.442, 17.698, 0, 200, '#dadada'),
    front: duty([['sb', 0, 7.240], ['on', 7.240, 7.835], ['off', 7.835, 7.840], ['on', 7.840, 8.356], ['d', 8.356, 11.508], ['off', 11.508, 11.555],
      ['d', 11.555, 11.953], ['on', 11.953, 12.540], ['d', 12.540, 14.352], ['off', 14.352, 14.398], ['d', 14.398, 16.103], ['on', 16.103, 16.342], ['d', 16.342, 24]]) +
      [9.354, 10.354, 11.354, 13.540, 15.395, 17.340].map(h => vline(h, 102, 115.500, '#3b763e', 2.500, 'opacity=".75"')).join('') +
      [[3.620, 57, '7h 14m(10h 51m)'], [7.840, 13, '&lt; 1m'], [7.540, 144, '35m'], [8.100, 144, '30m'], [9.920, 100, '3h 09m'], [9.920, 123, '67m/h'],
        [11.530, 13, '02m'], [11.755, 100, '23m'], [11.755, 123, '68m/h'], [12.250, 144, '35m'], [13.440, 100, '1h 48m'], [13.440, 123, '73m/h'],
        [14.370, 13, '02m'], [15.250, 100, '1h 42m'], [15.250, 123, '53m/h'], [16.220, 144, '14m'], [20.170, 100, '7h 39m(42h 10m)']].map(a => text(...a)).join('') +
      [9.920, 11.755, 13.440, 15.250, 20.120].map(h => bang(h)).join('') + bang(7.840, 10) +
      [9.920, 11.755, 13.440, 15.250, 16.830].map(trip).join('') + sync(11.980) + camera(17.570) +
      vline(7.330, 0, 174, '#2a6aa8', 2, 'stroke-dasharray="7 7"') +
      vline(7.475, 0, 174, '#fa8880', 5, 'stroke-dasharray="10 10"') +
      vline(7.840, 0, 174, '#86b1fb', 3, 'stroke-dasharray="6 6"') +
      vline(8.027, 0, 174, '#c73132', 3, 'stroke-dasharray="5 5"') +
      vline(8.290, 0, 174, '#3b763e', 3, 'stroke-dasharray="5 5"') +
      vline(11.950, 0, 174, '#86b1fb', 3, 'stroke-dasharray="6 6"') +
      vline(12.060, 0, 174, '#c73132', 3, 'stroke-dasharray="5 5"') +
      vline(12.153, 0, 174, '#3b763e', 3, 'stroke-dasharray="5 5"') +
      drop(7.840) + drop(11.950) +
      text(7.475, 197, 'IR', 'fill="#888" font-size="14"') +
      at(7.330, 183, '<svg x="-7" y="-7" width="14" height="14" fill="#3a7ab8"><use href="#i-seal"/></svg>') +
      key(8.027, '#c73132') + key(8.290, '#3b763e') + key(12.060, '#c73132') + key(12.153, '#3b763e') +
      warn(20.280) + warn(20.830) + warn(21.240)
  }
];

const icon = name => `<svg class="ic"><use href="#i-${name}"/></svg>`;

document.getElementById('days').innerHTML = days.map(d => `
  <article class="day">
    <div class="day-head">
      <div class="row">
        <div class="group"><button class="btn sm faded codriver">Co-drivers <i class="caret"></i></button><button class="btn sm outline truck" aria-label="Truck">${icon('truck')}</button></div>
        <button class="btn sm yellow trucks">Trucks <i class="caret"></i></button>
        <div class="group"><button class="btn sm green engine ${d.engine ? '' : 'idle'}" aria-label="Engine">${icon('engine')}${d.engine ? `<span class="num">${d.engine}</span>` : ''}</button><button class="btn sm sq sync" aria-label="Refresh">${icon('refresh')}</button></div>
      </div>
      <h3>${d.title}${icon('seal')}</h3>
    </div>
    <div class="day-body">
      <div class="rows names"><span class="off">OFF</span><span class="sb">SB</span><span class="d">D</span><span class="on-duty">ON</span></div>
      <svg class="chart">${d.back}${grid()}${d.front}</svg>
      <div class="rows sums"><span class="off">${d.sums[0]}</span><span class="sb">${d.sums[1]}</span><span class="d">${d.sums[2]}</span><span class="on-duty">${d.sums[3]}</span></div>
    </div>
    <div class="foot"><button class="btn sm outline cm" aria-label="Comments" ${d.note ? '' : 'disabled'}>${icon('comment')}</button><button class="btn sm teal log">Log Events ${icon('chevron')}</button></div>
  </article>`).join('');
```
